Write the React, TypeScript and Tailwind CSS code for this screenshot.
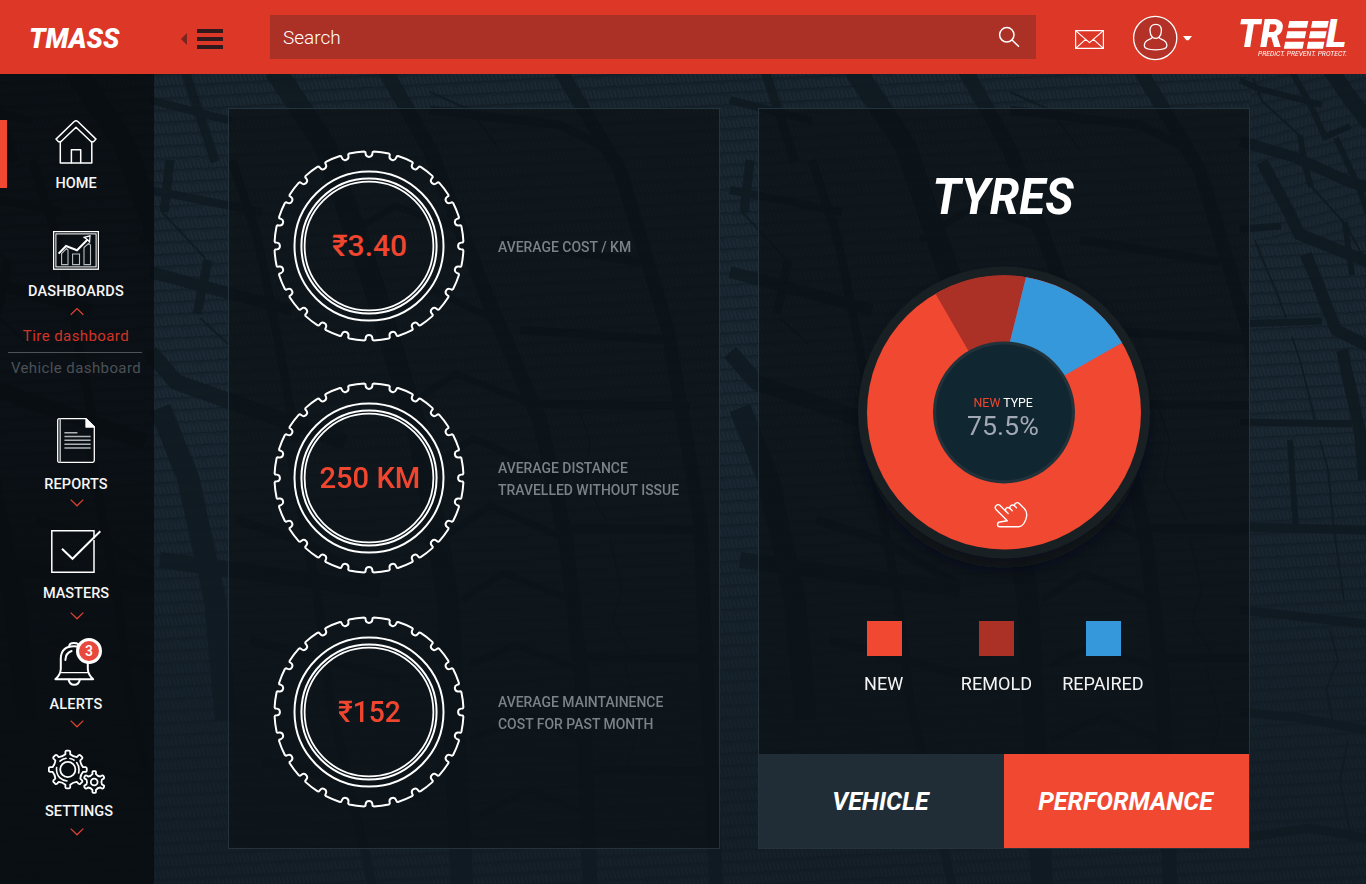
import type { ReactNode } from "react";

const polar = (cx: number, cy: number, r: number, deg: number) => {
  const a = ((deg - 90) * Math.PI) / 180;
  return `${(cx + r * Math.cos(a)).toFixed(2)} ${(cy + r * Math.sin(a)).toFixed(2)}`;
};

function tyrePath(cx: number, cy: number, r: number, notches: number) {
  const step = 360 / notches;
  let d = "";
  for (let i = 0; i < notches; i++) {
    const a = i * step;
    d += `${i ? "L" : "M"}${polar(cx, cy, r, a - 2.9)}`;
    d += `L${polar(cx, cy, r - 0.6, a - 2.2)}L${polar(cx, cy, r - 2.4, a - 2.1)}`;
    d += `A3.4 3.4 0 0 0 ${polar(cx, cy, r - 2.4, a + 2.1)}`;
    d += `L${polar(cx, cy, r - 0.6, a + 2.2)}L${polar(cx, cy, r, a + 2.9)}`;
    d += `A${r} ${r} 0 0 1 ${polar(cx, cy, r, a + step - 2.9)}`;
  }
  return d + "Z";
}

function gearPath(cx: number, cy: number, outer: number, root: number, teeth: number) {
  const step = 360 / teeth;
  let d = "";
  for (let i = 0; i < teeth; i++) {
    const a = i * step;
    const tip = step * 0.15;
    const base = step * 0.2;
    d += `${i ? "L" : "M"}${polar(cx, cy, root, a - base)}`;
    d += `L${polar(cx, cy, outer - 1, a - tip * 1.15)}Q${polar(cx, cy, outer, a - tip)} ${polar(cx, cy, outer, a - tip * 0.5)}`;
    d += `L${polar(cx, cy, outer, a + tip * 0.5)}Q${polar(cx, cy, outer, a + tip)} ${polar(cx, cy, outer - 1, a + tip * 1.15)}`;
    d += `L${polar(cx, cy, root, a + base)}`;
    d += `Q${polar(cx, cy, root - 1.6, a + step / 2)} ${polar(cx, cy, root, a + step - base)}`;
  }
  return d + "Z";
}

const TYRE = tyrePath(96, 96, 94.5, 24);
const GEAR_BIG = gearPath(19.8, 20.5, 19, 15.4, 8);
const GEAR_SMALL = gearPath(46.2, 33, 11, 8.2, 6);

function Grooves() {
  return (
    <g fill="none" stroke="#0f1920" strokeLinejoin="round" opacity="0.85">
      <path strokeWidth="8" d="M150 100L232 121" />
      <path strokeWidth="9" d="M185 70L202 122L215 162" />
      <path strokeWidth="9" d="M170 160L164 212" />
      <path strokeWidth="8" d="M150 190L262 212" />
      <path strokeWidth="2" d="M162 212L205 258M200 318L228 344M430 92L470 110L500 150" />
      <path strokeWidth="9" d="M208 260L197 314" />
      <path strokeWidth="12" d="M150 272L292 310" />
      <path strokeWidth="16" d="M150 352L176 382L345 442M160 560L380 590" />
      <path strokeWidth="22" d="M160 408L188 478L215 600L226 720" />
      <path strokeWidth="9" d="M232 160L258 240L278 340L296 440M290 450L318 600L330 700L372 884" />
      <path strokeWidth="22" d="M275 70L325 145L375 290L420 440L448 600L462 884" />
      <path strokeWidth="15" d="M385 70L430 150L488 300L540 420L566 540L582 680L590 884" />
      <path strokeWidth="14" d="M560 70L620 170L668 330L700 520L716 884" />
      <path strokeWidth="7" d="M340 240L395 206L470 232M375 320L432 290L500 322M400 410L456 374L535 405M428 470L473 438L548 472M440 540L490 506L560 536M462 600L503 573L572 600M470 665L515 645L580 670M470 740L525 715L584 742M480 815L530 790L590 815" />
      <path strokeWidth="9" d="M430 110L560 125L610 150M500 240L640 262M520 330L670 340M540 404L690 406M560 528L708 530M578 658L716 658M588 770L720 772M236 520L300 540L380 585M250 640L400 680M262 760L430 800" />
      <path strokeWidth="1.6" d="M575 400L590 440L584 480L606 520M610 540L622 590L612 620L632 655M625 665L640 720L628 765" />
    </g>
  );
}

function Backdrop() {
  return (
    <svg className="absolute inset-0 h-[884px] w-[1366px]" viewBox="0 0 1366 884" aria-hidden="true">
      <defs>
        <linearGradient id="base" gradientUnits="userSpaceOnUse" x1="0" y1="74" x2="0" y2="884">
          <stop offset="0" stopColor="#16222b" />
          <stop offset="0.45" stopColor="#17242e" />
          <stop offset="1" stopColor="#131e27" />
        </linearGradient>
        <linearGradient id="fade" x1="0" y1="0" x2="0" y2="1">
          <stop offset="0.45" stopColor="#111b23" stopOpacity="0" />
          <stop offset="0.8" stopColor="#111b23" stopOpacity="0.45" />
        </linearGradient>
        <pattern id="tread" width="24" height="12" patternUnits="userSpaceOnUse" patternTransform="rotate(-3) skewX(14)">
          <path d="M2 2V10M6 1V10M10 2V10M14 3V10M18 2V10M22 1V10" stroke="#2b3a47" strokeWidth="1.2" opacity="0.38" />
          <path d="M0 11L4 10L8 12L12 10L16 11.6L20 10L24 11" stroke="#0e181f" strokeWidth="1.2" fill="none" opacity="0.6" />
        </pattern>
        <pattern id="treadUp" width="24" height="11" patternUnits="userSpaceOnUse" patternTransform="rotate(-14) skewX(-16)">
          <path d="M2 2V9M6 2V9M10 2V9M14 2V9M18 2V9M22 2V9" stroke="#273742" strokeWidth="1.1" opacity="0.35" />
          <path d="M0 10L4 9L8 11L12 9L16 10.6L20 9L24 10" stroke="#0e181f" strokeWidth="1.1" fill="none" opacity="0.6" />
        </pattern>
      </defs>
      <rect width="1366" height="884" fill="url(#base)" />
      <rect width="1366" height="884" fill="url(#tread)" />
      <g transform="translate(-200 0)"><Grooves /></g>
      <rect x="154" y="0" width="600" height="884" fill="url(#base)" />
      <rect x="154" y="0" width="600" height="884" fill="url(#tread)" />
      <Grooves />
      <g transform="translate(580 0)"><Grooves /></g>
      <rect x="1250" width="116" height="884" fill="url(#base)" />
      <rect x="1250" width="116" height="240" fill="url(#treadUp)" />
      <rect x="1250" y="240" width="116" height="644" fill="url(#tread)" />
      <g fill="none" stroke="#0f1920" opacity="0.9">
        <path strokeWidth="6" d="M1240 80L1256 88L1322 105" />
        <path strokeWidth="2" d="M1253 78L1262 101L1300 136M1310 185L1346 225L1366 262" />
        <path strokeWidth="6" d="M1291 70L1311 106L1325 137L1350 126M1336 138L1360 190L1368 214M1300 135L1305 165L1311 187M1345 222L1352 275" />
        <path strokeWidth="16" d="M1328 66L1350 98L1370 124" />
        <path strokeWidth="11" d="M1240 141L1294 157L1350 182L1368 187" />
        <path strokeWidth="12" d="M1262 162L1290 214L1299 234L1368 262" />
        <path strokeWidth="12" d="M1306 254L1336 330L1368 346M1342 350L1360 432L1364 480" />
        <path strokeWidth="7" d="M1240 229L1281 226M1240 324L1322 321M1240 422L1352 424" />
        <path strokeWidth="1.8" d="M1255 240L1266 268L1275 288L1286 318M1292 337L1300 360L1307 388L1315 420M1320 440L1328 470L1334 530L1344 600" />
        <path strokeWidth="9" d="M1240 527L1366 530M1240 610L1366 624M1240 712L1300 718L1366 730M1240 838L1310 828L1366 838" />
        <path strokeWidth="6" d="M1290 440L1296 530" />
        <path strokeWidth="1.8" d="M1330 630L1338 660L1326 690L1334 726M1348 740L1340 780L1350 832" />
      </g>
      <rect width="1366" height="884" fill="url(#fade)" />
    </svg>
  );
}

const line = { fill: "none", stroke: "#fff", strokeLinejoin: "round", strokeLinecap: "round" } as const;

function HomeIcon() {
  return (
    <svg className="h-[45px] w-[42px]" viewBox="0 0 42 45" {...line} strokeWidth="1.5">
      <path d="M1 20.1L19.2 2.5Q21 1 22.8 2.5L41 20.1L38.5 22.8H36.2L21 8.2L5.8 22.8H3.5Z" />
      <path d="M5.3 22.6V44H36.8V22.6" />
      <path d="M16.4 43.8V30.8H25.7V43.8" />
    </svg>
  );
}

function DashboardIcon() {
  return (
    <svg className="h-[39px] w-[46px]" viewBox="0 0 46 39" fill="none" stroke="#fff">
      <rect x="0.6" y="0.6" width="44.8" height="37.6" strokeWidth="1.3" />
      <rect x="2.9" y="2.9" width="40.2" height="33" strokeWidth="1" />
      <path d="M8.6 33.6V22.5L13.5 17.6L15 19V33.6ZM19.6 33.6V23H26.5V33.6ZM31 33.6V16.5L35.5 12.5L37.5 14V33.6Z" stroke="#b9bec2" strokeWidth="1.1" />
      <path d="M5.6 22.6L13 15L24 19.3L34.6 8.5" strokeWidth="2" />
      <path d="M31 6.3L37 4.8L36.6 11L34.6 8.8Z" strokeWidth="1.2" />
    </svg>
  );
}

function ReportIcon() {
  return (
    <svg className="h-[45px] w-[38px]" viewBox="0 0 38 45" {...line} strokeWidth="1.3">
      <path d="M2.2 0.7H29L37.3 9V42.6Q37.3 44.3 35.6 44.3H2.2Q0.7 44.3 0.7 42.6V2.4Q0.7 0.7 2.2 0.7Z" />
      <path d="M3.2 1V44" stroke="#aeb3b6" strokeWidth="1.6" />
      <path d="M29 0.7V9H37.3Z" fill="#fff" />
      <path d="M7.4 14.8H20.4M7.4 18.4H33.6M7.4 22.2H33.6M7.4 26.2H33.6M7.4 30H33.6" stroke="#aeb3b6" strokeWidth="1.5" strokeLinecap="butt" />
    </svg>
  );
}

function MasterIcon() {
  return (
    <svg className="h-[43px] w-[50px]" viewBox="0 0 50 43" fill="none" stroke="#fff">
      <path d="M43 8.5V0.8H0.8V42.2H43V10" strokeWidth="1.5" />
      <path d="M11 18.8L21.5 28.8L49.3 1.2" strokeWidth="2" />
    </svg>
  );
}

function BellIcon() {
  return (
    <span className="relative block h-[48px] w-[48px]">
      <svg className="h-[48px] w-[48px]" viewBox="0 0 48 48" {...line} strokeWidth="2">
        <path d="M15.2 8.4Q15.2 5 20 5Q24.8 5 24.8 8.4" />
        <path d="M1.4 41.2Q6.4 37 6.8 31V20Q7.4 8.2 20 8.2Q33.4 8.2 33.8 20V31Q34.2 37 39.2 41.2Z" />
        <path d="M6.6 34.6H34" strokeWidth="1.4" />
        <path d="M11.4 22Q11.6 15 17.6 13" />
        <path d="M14.6 41.5Q15.4 46.8 20.3 46.8Q25 46.8 25.8 41.5" />
      </svg>
      <span className="absolute top-0 left-[22px] flex size-[26px] items-center justify-center rounded-full border-[3px] border-white bg-[#e8493c] text-[14px] leading-none font-medium text-white">
        3
      </span>
    </span>
  );
}

function GearsIcon() {
  return (
    <svg className="ml-[2px] h-[45px] w-[58px]" viewBox="0 0 58 45" {...line} strokeWidth="1.8">
      <path d={GEAR_BIG} />
      <circle cx="19.8" cy="20.5" r="7.6" />
      <path d="M12 12.2Q14.6 9.8 18 9.3M8.6 18.5Q8 25 12 28.8Q15 31.6 19 32M22 9.5Q24.5 10 26 11.2M28.6 13.6Q32 18 30.6 24" strokeWidth="1.6" />
      <path d={GEAR_SMALL} fill="#0a0f13" />
      <circle cx="46.2" cy="33" r="3.4" />
    </svg>
  );
}

function Chevron({ up = false }: { up?: boolean }) {
  return (
    <svg className="block h-[8px] w-[14px]" viewBox="0 0 14 8" fill="none" stroke="#e0432f" strokeWidth="1.2">
      <path d={up ? "M0.7 6.8L7 0.6L13.3 6.8" : "M0.7 0.6L7 6.8L13.3 0.6"} />
    </svg>
  );
}

function NavItem({ icon, label, className, labelClass, children }: { icon: ReactNode; label: string; className: string; labelClass: string; children?: ReactNode }) {
  return (
    <li className={`flex flex-col items-center ${className}`}>
      {icon}
      <span className={`block h-5 pt-px text-[14.5px] leading-5 font-medium whitespace-nowrap text-[#f6f6f6] ${labelClass}`}>{label}</span>
      {children}
    </li>
  );
}

function Sidebar() {
  return (
    <nav className="relative h-[810px] w-[154px] shrink-0 bg-[#070b0f]/80">
      <span className="absolute top-[46px] left-0 h-[68px] w-[7px] bg-[#f14831]" />
      <ul className="flex w-[152px] flex-col">
        <NavItem className="h-[119px] pt-[45px]" labelClass="mt-[9px]" icon={<HomeIcon />} label="HOME" />
        <NavItem className="h-[185px] pt-[38px]" labelClass="mt-[11px] tracking-[0.2px]" icon={<DashboardIcon />} label="DASHBOARDS">
          <span className="mt-[7px] ml-px"><Chevron up /></span>
          <span className="mt-[10px] block h-5 text-[15px] leading-5 tracking-[0.42px] whitespace-nowrap text-[#d23425]">Tire dashboard</span>
          <span className="mt-[6px] -ml-[2px] block h-px w-[134px] bg-[#4d5357]" />
          <span className="mt-[5px] block h-5 text-[15px] leading-5 tracking-[0.4px] whitespace-nowrap text-[#4b5155]">Vehicle dashboard</span>
        </NavItem>
        <NavItem className="h-[129px] pt-[40px]" labelClass="mt-[11px] tracking-[0.1px]" icon={<ReportIcon />} label="REPORTS">
          <span className="mt-[5px] ml-px"><Chevron /></span>
        </NavItem>
        <NavItem className="h-[113px] pt-[23px]" labelClass="mt-[10px]" icon={<MasterIcon />} label="MASTERS">
          <span className="mt-[9px] ml-px"><Chevron /></span>
        </NavItem>
        <NavItem className="h-[108px] pt-[18px]" labelClass="mt-[8px] tracking-[0.2px]" icon={<span className="ml-[4px]"><BellIcon /></span>} label="ALERTS">
          <span className="mt-[6px] ml-px"><Chevron /></span>
        </NavItem>
        <NavItem className="h-[110px] pt-[21px]" labelClass="mt-[7px] ml-[6px]" icon={<GearsIcon />} label="SETTINGS">
          <span className="mt-[7px] ml-px"><Chevron /></span>
        </NavItem>
      </ul>
    </nav>
  );
}

function Header() {
  return (
    <header className="relative flex h-[74px] items-start bg-[#dd3727] text-white">
      <div className="w-[181px] pt-[23px] pl-[29px] text-[27px] leading-[32px] font-black italic">TMASS</div>
      <svg className="mt-[29px] h-5 w-[42px]" viewBox="0 0 42 20">
        <path d="M0 10L6 4V16Z" fill="#7a251e" />
        <path d="M16 0H42V4H16ZM16 8H42V12H16ZM16 16H42V20H16Z" fill="#321a1c" />
      </svg>
      <label className="mt-[15px] ml-[47px] flex h-[44px] w-[766px] items-center justify-between bg-[#ab3026] pr-4 pl-[13px]">
        <span className="pt-[2px] text-[19px] leading-[42px] font-light">Search</span>
        <svg className="size-[22px]" viewBox="0 0 22 22" {...line} strokeWidth="1.5">
          <circle cx="8.8" cy="8.8" r="7.2" />
          <path d="M14 14L20.5 20.2" />
        </svg>
      </label>
      <svg className="mt-[30px] ml-[39px] h-[19px] w-[29px]" viewBox="0 0 29 19" {...line} strokeWidth="1.2">
        <path d="M0.6 0.6H28.4V18.4H0.6ZM0.6 0.6L14.5 12.6L28.4 0.6M0.6 18.4L10.6 9.4M28.4 18.4L18.4 9.4" />
      </svg>
      <svg className="mt-[15px] ml-[28px] h-[46px] w-[61px]" viewBox="0 0 61 46" {...line} strokeWidth="1.3">
        <circle cx="23.2" cy="23" r="21.6" fill="#b33127" />
        <path d="M23.7 9.3C27.2 9.3 29.4 11.6 29.4 15.4C29.4 18.8 28.4 20.8 27 22.2C27.2 23.4 28 23.8 29.8 24.4C33.4 25.6 34.9 27.4 34.9 30.8C34.9 33.6 31 34.8 23.6 34.8S12.3 33.6 12.3 30.8C12.3 27.4 13.8 25.6 17.4 24.4C19.2 23.8 20.2 23.4 20.4 22.2C19 20.8 18 18.8 18 15.4C18 11.6 20.2 9.3 23.7 9.3Z" />
        <path d="M20.4 22.2Q23.7 24.6 27 22.2" />
        <path d="M51 21H60L56.6 25.2H54.4Z" fill="#fff" stroke="none" />
      </svg>
      <div className="mt-[14px] ml-[45px] w-[112px]">
        <div className="flex h-[41px] items-center text-[39px] leading-[41px] font-black italic">
          <span className="w-[46px] origin-left scale-x-[0.93]">TR</span>
          <svg className="h-[28px] w-[46px] shrink-0" viewBox="0 0 46 28" fill="#fff">
            <path d="M5.4 0H24.4L22.9 6.8H4ZM3.4 10.3H22.2L20.8 17.2H2ZM1.2 20.8H20L18.6 27.8H-0.2Z" />
            <path d="M28.4 0H44.8L43.4 6.8H27ZM26.3 10.3H42.6L41.2 17.2H24.9ZM24.1 20.8H40.4L39 27.8H22.7Z" />
          </svg>
          <span className="-ml-[4px] origin-left">L</span>
        </div>
        <div className="-mt-[6px] ml-[20px] h-[10px] w-max origin-left scale-x-[0.845] text-[8px] leading-[10px] whitespace-nowrap italic">PREDICT. PREVENT. PROTECT.</div>
      </div>
    </header>
  );
}

function Metric({ value, valueClass = "", lines, className }: { value: string; valueClass?: string; lines: string[]; className: string }) {
  return (
    <div className={`flex h-[192px] items-center ${className}`}>
      <div className="grid size-[192px] shrink-0 place-items-center">
        <svg className="col-start-1 row-start-1 size-[192px]" viewBox="0 0 192 192" fill="none" stroke="#fff" strokeWidth="2">
          <path d={TYRE} strokeLinejoin="round" />
          <circle cx="96" cy="96" r="74.5" />
          <circle cx="96" cy="96" r="67.6" />
          <circle cx="96" cy="96" r="64.4" strokeWidth="1.8" />
        </svg>
        <span className={`col-start-1 row-start-1 ml-px text-[30px] leading-9 font-medium whitespace-nowrap text-[#f0462f] ${valueClass}`}>{value}</span>
      </div>
      <p className="ml-[33px] origin-left scale-x-[0.93] pt-px text-[15px] leading-[22px] font-medium whitespace-nowrap text-[#7c8286]">
        {lines.map((l) => (
          <span key={l} className="block">{l}</span>
        ))}
      </p>
    </div>
  );
}

function TyreChart() {
  return (
    <div className="mt-[39px] grid place-items-center">
      <svg className="col-start-1 row-start-1 h-[320px] w-[340px]" viewBox="0 0 340 320">
        <defs>
          <filter id="soft" x="-20%" y="-20%" width="140%" height="150%">
            <feGaussianBlur stdDeviation="9" />
          </filter>
        </defs>
        <circle cx="170" cy="162" r="142" fill="#0a0f14" opacity="0.7" filter="url(#soft)" />
        <circle cx="170" cy="148.4" r="146" fill="#192024" />
        <circle cx="170" cy="148.4" r="137" fill="#f14831" />
        <path d="M170 148.4L101.5 29.8A137 137 0 0 1 192 13.2L166.7 115Z" fill="#ab3026" />
        <path d="M166.7 115L192 13.2A137 137 0 0 1 288 78.7L226 113.9Z" fill="#3498db" />
        <circle cx="170" cy="148.4" r="71" fill="#22323b" />
        <circle cx="170" cy="148.4" r="67.8" fill="#102630" />
        <g transform="translate(160.6 237.4)" {...line} strokeWidth="1.4">
          <path d="M12.7 19.3L1.2 7.8C-0.6 5.4 2.6 1.8 5.4 4L11 9.6C10.3 7.2 12.6 5 15.2 6.8C15 4.2 17.6 2.6 19.8 4.2C20 1.4 23 0.4 24.6 2L29.4 6.8C32.4 9.8 32.6 14.6 31 18.6C29.8 21.8 27 25.3 24.4 25.3H5.2C2.2 25.3 2.2 20.8 5.2 20.6Z" />
          <path d="M11 9.6L13.6 12.2M15.2 6.8L17.6 9.4M19.8 4.2L21.8 6.4" />
        </g>
      </svg>
      <div className="z-10 col-start-1 row-start-1 mb-[13px] flex flex-col items-center pr-[2px]">
        <span className="block scale-x-[0.95] text-[13px] leading-4 whitespace-nowrap text-white">
          <span className="text-[#f0462f]">NEW</span> TYPE
        </span>
        <span className="block scale-x-[1.03] text-[26px] leading-[30px] text-[#a3a8b5]">75.5%</span>
      </div>
    </div>
  );
}

function Legend({ swatch, label, className }: { swatch: string; label: string; className: string }) {
  return (
    <div className={`flex flex-col items-center ${className}`}>
      <span className={`block size-[35px] ${swatch}`} />
      <span className="mt-4 block scale-x-[0.95] text-[19px] leading-6 whitespace-nowrap text-[#f4f4f4]">{label}</span>
    </div>
  );
}

export default function App() {
  return (
    <div className="relative h-[884px] w-[1366px] overflow-hidden bg-[#16242e] font-[Roboto,sans-serif]">
      <Backdrop />
      <Header />
      <div className="relative flex">
        <Sidebar />
        <main className="flex gap-[38px] pt-[34px] pl-[74px]">
          <section className="h-[741px] w-[492px] border border-[#24323c] bg-[#0c1116]/70 pt-[41px] pl-[44px]">
            <Metric className="" value="₹3.40" lines={["AVERAGE COST / KM"]} />
            <Metric className="mt-[40px]" value="250 KM" valueClass="scale-x-[0.973]" lines={["AVERAGE DISTANCE", "TRAVELLED WITHOUT ISSUE"]} />
            <Metric className="mt-[42px]" value="₹152" valueClass="scale-x-[0.943]" lines={["AVERAGE MAINTAINENCE", "COST FOR PAST MONTH"]} />
          </section>
          <section className="flex h-[741px] w-[492px] flex-col border border-[#24323c] bg-[#0c1116]/70 pt-[62px]">
            <h2 className="text-center text-[49px] leading-[54px] font-bold text-white italic">
              <span className="inline-block -translate-x-px scale-x-[0.97]">TYRES</span>
            </h2>
            <TyreChart />
            <div className="flex">
              <Legend className="ml-[85px] w-[80px] pt-[37px]" swatch="bg-[#f14831]" label="NEW" />
              <Legend className="ml-[32px] w-[80px] pt-[37px]" swatch="bg-[#ab3026]" label="REMOLD" />
              <Legend className="ml-[22px] w-[90px] pt-[37px]" swatch="bg-[#3498db]" label="REPAIRED" />
            </div>
            <div className="mt-auto grid h-[94px] grid-cols-2 text-[25px] font-bold text-white italic">
              <button className="bg-[#202d36] pt-[2px] pr-[2px] italic">VEHICLE</button>
              <button className="bg-[#f14831] pt-[2px] pr-[2px] italic">PERFORMANCE</button>
            </div>
          </section>
        </main>
      </div>
    </div>
  );
}
